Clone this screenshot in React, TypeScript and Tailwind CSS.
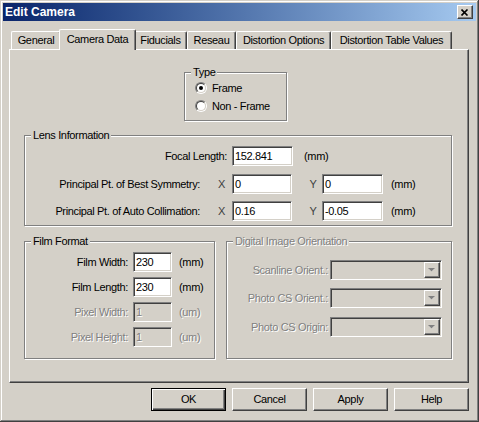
import React from 'react';

const sunken =
  'border border-t-[#808080] border-l-[#808080] border-r-white border-b-white shadow-[inset_1px_1px_0_#404040,inset_-1px_-1px_0_#d4d0c8]';
const raised =
  'border border-t-white border-l-white border-r-[#404040] border-b-[#404040] shadow-[inset_-1px_-1px_0_#808080]';
const etched = 'border border-[#808080] shadow-[1px_1px_0_#fff,inset_1px_1px_0_#fff]';
const disabledText = 'text-[#808080] [text-shadow:1px_1px_0_#fff]';

const tabs = [
  { label: 'General', w: 'w-[50px]' },
  { label: 'Camera Data', w: 'w-[77px]', active: true },
  { label: 'Fiducials', w: 'w-[53px]' },
  { label: 'Reseau', w: 'w-[49px]' },
  { label: 'Distortion Options', w: 'w-[95px]' },
  { label: 'Distortion Table Values', w: 'w-[121px]' },
];

function GroupLabel({ text, disabled }: { text: string; disabled?: boolean }) {
  return (
    <span
      className={`-mt-[7px] ml-[6px] block w-fit bg-[#d4d0c8] px-[2px] leading-[13px] ${disabled ? disabledText : ''}`}
    >
      {text}
    </span>
  );
}

function Radio({ checked, label }: { checked?: boolean; label: string }) {
  return (
    <div className="flex h-[16px] items-center">
      <span className="flex h-[12px] w-[12px] items-center justify-center rounded-full border border-t-[#808080] border-l-[#808080] border-r-white border-b-white">
        <span className="flex h-[10px] w-[10px] items-center justify-center rounded-full border border-t-[#404040] border-l-[#404040] border-r-[#d4d0c8] border-b-[#d4d0c8] bg-white">
          {checked && <span className="h-[4px] w-[4px] rounded-full bg-black" />}
        </span>
      </span>
      <span className="ml-[5px]">{label}</span>
    </div>
  );
}

function Field({ value, className, disabled }: { value: string; className: string; disabled?: boolean }) {
  return (
    <div
      className={`${sunken} flex h-[20px] items-center pl-[2px] ${disabled ? `bg-[#d4d0c8] ${disabledText}` : 'bg-white'} ${className}`}
    >
      {value}
    </div>
  );
}

function Combo() {
  return (
    <div className={`${sunken} ml-[2px] flex h-[20px] w-[112px] justify-end bg-[#d4d0c8] p-px`}>
      <div className={`${raised} flex w-[16px] items-center justify-center`}>
        <svg width="8" height="5" viewBox="0 0 8 5">
          <path d="M1 1h5L3.5 3.5z" fill="#fff" />
          <path d="M0 0h7L3.5 3.5z" fill="#808080" />
        </svg>
      </div>
    </div>
  );
}

function Btn({ label, isDefault }: { label: string; isDefault?: boolean }) {
  return (
    <button
      className={`flex h-[23px] w-[75px] items-center justify-center bg-[#d4d0c8] ${
        isDefault
          ? 'border border-black shadow-[inset_1px_1px_0_#fff,inset_-1px_-1px_0_#404040,inset_-2px_-2px_0_#808080]'
          : raised
      }`}
    >
      {label}
    </button>
  );
}

export default function App() {
  return (
    <div className="h-[422px] w-[479px] bg-[#d4d0c8] p-[3px] font-['Liberation_Sans',Arial,sans-serif] text-[11px] leading-[13px] tracking-[-0.35px] text-black shadow-[inset_-1px_-1px_0_#404040,inset_1px_1px_0_#d4d0c8,inset_-2px_-2px_0_#808080,inset_2px_2px_0_#fff]">
      {/* Title bar */}
      <div className="flex h-[18px] items-center justify-between bg-linear-to-r from-[#0a246a] to-[#a6caf0] pl-[2px] pr-[3px]">
        <span className="text-[12px] font-bold tracking-normal text-white">Edit Camera</span>
        <button className={`${raised} flex h-[14px] w-[16px] items-center justify-center bg-[#d4d0c8]`}>
          <svg width="8" height="7" viewBox="0 0 8 7">
            <path d="M0.5 0.5l6 6M6.5 0.5l-6 6" stroke="#000" strokeWidth="1.6" />
          </svg>
        </button>
      </div>

      <div className="pl-[6px]">
        {/* Tabs */}
        <div className="flex h-[28px] items-end pl-[2px]">
          {tabs.map((t) =>
            t.active ? (
              <div
                key={t.label}
                className={`relative z-10 -mx-[2px] -mb-px flex h-[21px] ${t.w} items-center justify-center rounded-t-[2px] border-l border-t border-r border-t-white border-l-white border-r-[#404040] bg-[#d4d0c8] pb-[2px] shadow-[inset_-1px_0_0_#808080]`}
              >
                {t.label}
              </div>
            ) : (
              <div
                key={t.label}
                className={`flex h-[18px] ${t.w} items-center justify-center rounded-t-[2px] border-l border-t border-r border-t-white border-l-white border-r-[#404040] shadow-[inset_-1px_0_0_#808080]`}
              >
                {t.label}
              </div>
            )
          )}
        </div>

        {/* Panel */}
        <div className="flex h-[334px] w-[460px] flex-col border border-t-white border-l-white border-r-[#404040] border-b-[#404040] shadow-[inset_-1px_-1px_0_#808080]">
          {/* Type */}
          <div className={`${etched} ml-[174px] mt-[22px] h-[49px] w-[103px]`}>
            <GroupLabel text="Type" />
            <div className="ml-[10px] mt-[1px] flex flex-col gap-[2px]">
              <Radio checked label="Frame" />
              <Radio label="Non - Frame" />
            </div>
          </div>

          {/* Lens Information */}
          <div className={`${etched} ml-[14px] mt-[14px] h-[91px] w-[428px]`}>
            <GroupLabel text="Lens Information" />
            <div className="mt-[4px] flex h-[20px] items-center">
              <span className="w-[202px] text-right">Focal Length:</span>
              <Field value="152.841" className="ml-[5px] w-[61px]" />
              <span className="ml-[11px]">(mm)</span>
            </div>
            <div className="mt-[8px] flex h-[20px] items-center">
              <span className="w-[175px] text-right">Principal Pt. of Best Symmetry:</span>
              <span className="ml-[17px] w-[9px] text-center text-[#404040]">X</span>
              <Field value="0" className="ml-[6px] w-[60px]" />
              <span className="ml-[17px] w-[8px] text-center text-[#404040]">Y</span>
              <Field value="0" className="ml-[5px] w-[61px]" />
              <span className="ml-[8px]">(mm)</span>
            </div>
            <div className="mt-[7px] flex h-[20px] items-center">
              <span className="w-[175px] text-right">Principal Pt. of Auto Collimation:</span>
              <span className="ml-[17px] w-[9px] text-center text-[#404040]">X</span>
              <Field value="0.16" className="ml-[6px] w-[60px]" />
              <span className="ml-[17px] w-[8px] text-center text-[#404040]">Y</span>
              <Field value="-0.05" className="ml-[5px] w-[61px]" />
              <span className="ml-[8px]">(mm)</span>
            </div>
          </div>

          <div className="ml-[14px] mt-[15px] flex gap-[11px]">
            {/* Film Format */}
            <div className={`${etched} h-[118px] w-[191px]`}>
              <GroupLabel text="Film Format" />
              <div className="mt-[4px] flex flex-col gap-[5px]">
                <div className="flex h-[20px] items-center">
                  <span className="w-[103px] text-right">Film Width:</span>
                  <Field value="230" className="ml-[5px] w-[39px]" />
                  <span className="ml-[7px]">(mm)</span>
                </div>
                <div className="flex h-[20px] items-center">
                  <span className="w-[103px] text-right">Film Length:</span>
                  <Field value="230" className="ml-[5px] w-[39px]" />
                  <span className="ml-[7px]">(mm)</span>
                </div>
                <div className="flex h-[20px] items-center">
                  <span className={`w-[103px] text-right ${disabledText}`}>Pixel Width:</span>
                  <Field value="1" disabled className="ml-[5px] w-[39px]" />
                  <span className={`ml-[7px] ${disabledText}`}>(um)</span>
                </div>
                <div className="flex h-[20px] items-center">
                  <span className={`w-[103px] text-right ${disabledText}`}>Pixel Height:</span>
                  <Field value="1" disabled className="ml-[5px] w-[39px]" />
                  <span className={`ml-[7px] ${disabledText}`}>(um)</span>
                </div>
              </div>
            </div>

            {/* Digital Image Orientation */}
            <div className={`${etched} h-[118px] w-[226px]`}>
              <GroupLabel text="Digital Image Orientation" disabled />
              <div className="mt-[12px] flex h-[20px] items-center">
                <span className={`w-[101px] text-right ${disabledText}`}>Scanline Orient.:</span>
                <Combo />
              </div>
              <div className="mt-[8px] flex h-[20px] items-center">
                <span className={`w-[101px] text-right ${disabledText}`}>Photo CS Orient.:</span>
                <Combo />
              </div>
              <div className="mt-[9px] flex h-[20px] items-center">
                <span className={`w-[101px] text-right ${disabledText}`}>Photo CS Origin:</span>
                <Combo />
              </div>
            </div>
          </div>
        </div>

        {/* Buttons */}
        <div className="mt-[5px] flex w-[460px] justify-end gap-[6px]">
          <Btn label="OK" isDefault />
          <Btn label="Cancel" />
          <Btn label="Apply" />
          <Btn label="Help" />
        </div>
      </div>
    </div>
  );
}
